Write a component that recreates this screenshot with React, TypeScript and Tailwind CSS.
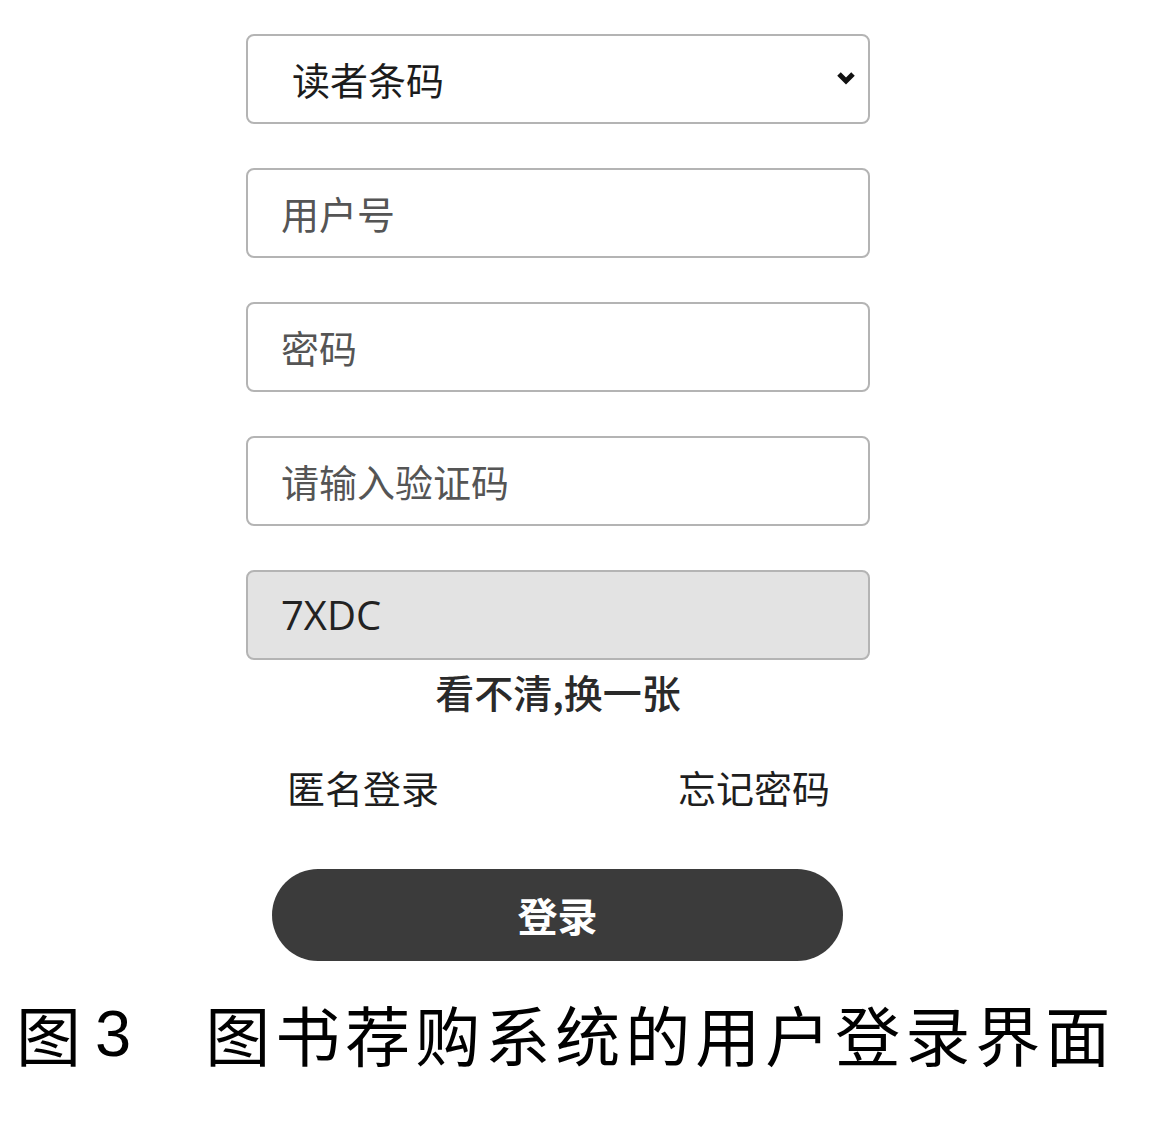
const field =
  'h-[90px] w-full rounded-[8px] border-2 border-[#b4b4b4] flex items-center text-[38px] leading-none'

export default function App() {
  return (
    <div
      className="w-[1160px] h-[1128px] bg-white flex flex-col"
      style={{ fontFamily: '"Noto Sans CJK SC", "Noto Sans", sans-serif' }}
    >
      <form className="ml-[246px] w-[624px] pt-[34px] flex flex-col">
        <div className={`${field} justify-between pl-[44px] pr-[10px] text-[#1c1c1c]`}>
          <span>读者条码</span>
          <svg width="24" height="18" viewBox="0 0 24 18" className="mt-[-2px]">
            <path d="M5 5 L12 12 L19 5" fill="none" stroke="#111" strokeWidth="5" />
          </svg>
        </div>

        <div className={`${field} mt-[44px] pl-[33px] text-[#555]`}>用户号</div>
        <div className={`${field} mt-[44px] pl-[33px] text-[#555]`}>密码</div>
        <div className={`${field} mt-[44px] pl-[33px] text-[#555]`}>请输入验证码</div>
        <div className={`${field} mt-[44px] pl-[33px] bg-[#e3e3e3] text-[#222] text-[40px]`}>
          <span style={{ fontFamily: '"Open Sans", "Liberation Sans", sans-serif' }}>7XDC</span>
        </div>

        <div className="mt-[10px] text-center text-[39px] leading-[43px] text-[#2a2a2a] font-medium">
          看不清,换一张
        </div>

        <div className="mt-[50px] pl-[41px] pr-[40px] flex justify-between text-[38px] leading-[48px] text-[#1e1e1e]">
          <span>匿名登录</span>
          <span>忘记密码</span>
        </div>

        <button
          type="submit"
          className="mt-[58px] ml-[26px] w-[571px] h-[92px] rounded-full bg-[#3b3b3b] text-white text-[40px] font-bold"
        >
          登录
        </button>
      </form>

      <div className="mt-[40px] pl-[16px] flex items-center text-[65px] leading-none text-black">
        <span>图</span>
        <span className="ml-[14px]" style={{ fontFamily: '"Liberation Sans", sans-serif' }}>
          3
        </span>
        <span className="ml-[74px] tracking-[5px]">图书荐购系统的用户登录界面</span>
      </div>
    </div>
  )
}
